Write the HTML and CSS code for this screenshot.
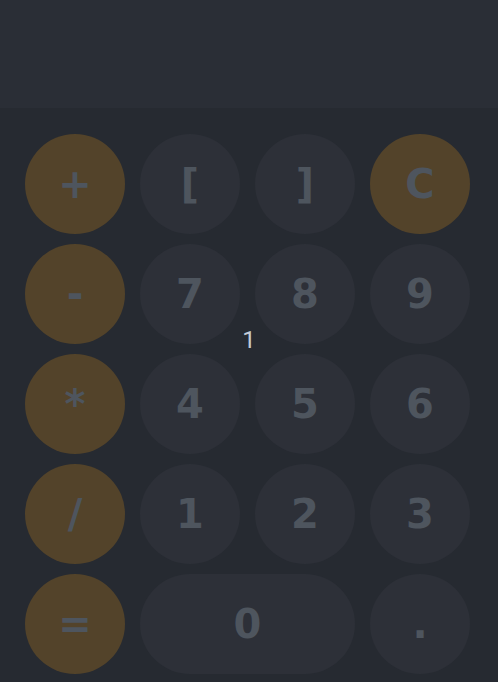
FILE: index.html
```html
<!DOCTYPE html>
<html>
<head>
<meta charset="utf-8">
<link rel="stylesheet" href="styles.css">
</head>
<body>
<div class="calc">
  <div class="display"></div>
  <div class="keypad">
    <button class="key op">+</button>
    <button class="key">[</button>
    <button class="key">]</button>
    <button class="key op">C</button>
    <button class="key op">-</button>
    <button class="key">7</button>
    <button class="key">8</button>
    <button class="key">9</button>
    <button class="key op">*</button>
    <button class="key">4</button>
    <button class="key">5</button>
    <button class="key">6</button>
    <button class="key op">/</button>
    <button class="key">1</button>
    <button class="key">2</button>
    <button class="key">3</button>
    <button class="key op">=</button>
    <button class="key wide">0</button>
    <button class="key">.</button>
    <div class="result">1</div>
  </div>
</div>
</body>
</html>
```
FILE: styles.css
```css
html, body {
  margin: 0;
  padding: 0;
  background: #262a31;
  font-family: "DejaVu Sans", sans-serif;
}
.calc {
  width: 498px;
  height: 682px;
  overflow: hidden;
}
.display {
  height: 108px;
  background: #2a2e36;
}
.keypad {
  position: relative;
  display: grid;
  grid-template-columns: repeat(4, 100px);
  grid-auto-rows: 100px;
  column-gap: 15px;
  row-gap: 10px;
  padding: 26px 28px 0 25px;
}
.key {
  border: none;
  margin: 0;
  padding: 0;
  border-radius: 50px;
  background: #2d3038;
  color: #4e555e;
  font-family: "DejaVu Sans", sans-serif;
  font-weight: bold;
  font-size: 40px;
  line-height: 100px;
  text-align: center;
}
.key.op {
  background: #53432a;
}
.key.wide {
  grid-column: span 2;
}
.result {
  position: absolute;
  left: 242px;
  top: 218px;
  width: 14px;
  text-align: center;
  font-family: Roboto, "Liberation Sans", sans-serif;
  font-size: 24px;
  line-height: 28px;
  color: #c3cad6;
}
```
